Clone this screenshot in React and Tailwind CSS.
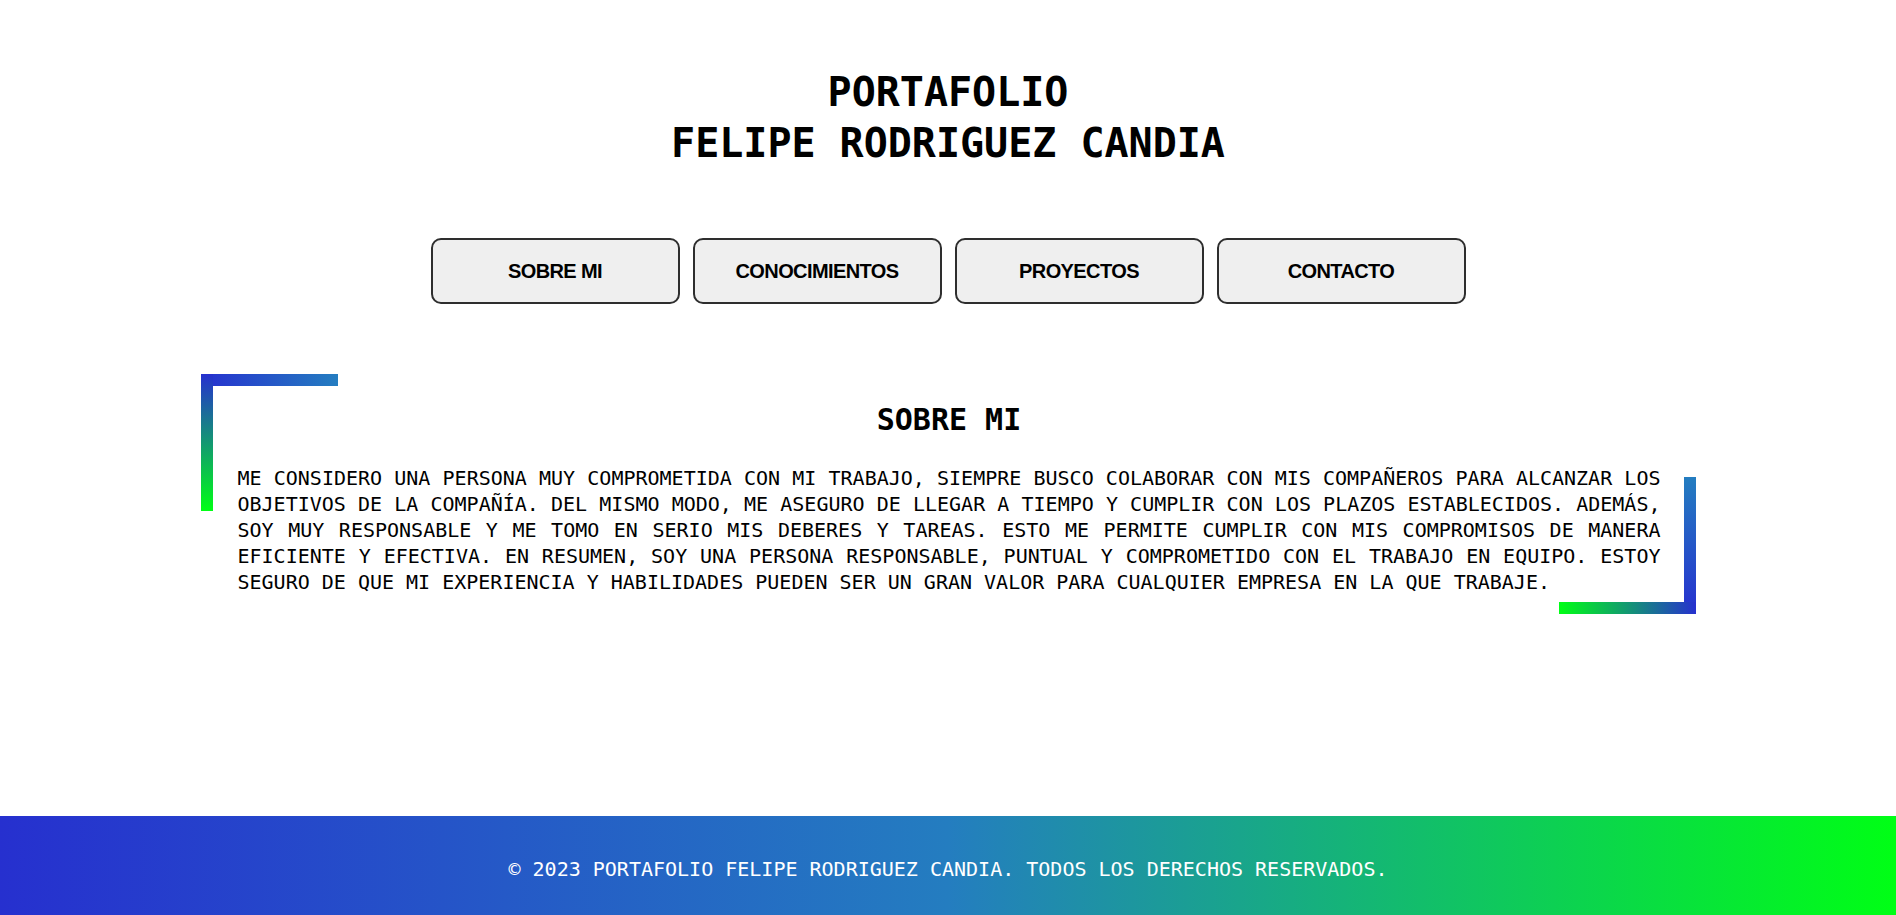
import React from 'react';

const mono = "font-['DejaVu_Sans_Mono','Liberation_Mono',monospace]";

const links = ['SOBRE MI', 'CONOCIMIENTOS', 'PROYECTOS', 'CONTACTO'];

const sobreMi =
  'ME CONSIDERO UNA PERSONA MUY COMPROMETIDA CON MI TRABAJO, SIEMPRE BUSCO COLABORAR CON MIS COMPAÑEROS PARA ALCANZAR LOS OBJETIVOS DE LA COMPAÑÍA. DEL MISMO MODO, ME ASEGURO DE LLEGAR A TIEMPO Y CUMPLIR CON LOS PLAZOS ESTABLECIDOS. ADEMÁS, SOY MUY RESPONSABLE Y ME TOMO EN SERIO MIS DEBERES Y TAREAS. ESTO ME PERMITE CUMPLIR CON MIS COMPROMISOS DE MANERA EFICIENTE Y EFECTIVA. EN RESUMEN, SOY UNA PERSONA RESPONSABLE, PUNTUAL Y COMPROMETIDO CON EL TRABAJO EN EQUIPO. ESTOY SEGURO DE QUE MI EXPERIENCIA Y HABILIDADES PUEDEN SER UN GRAN VALOR PARA CUALQUIER EMPRESA EN LA QUE TRABAJE.';

// decorative gradient corners around the section box
const Corners = () => (
  <>
    <div className="absolute left-0 top-0 w-[137px] h-[12px] bg-[linear-gradient(to_right,#2630cf,#247dc0)]" />
    <div className="absolute left-0 top-0 w-[12px] h-[137px] bg-[linear-gradient(to_bottom,#2630cf,#00ff15)]" />
    <div className="absolute right-0 bottom-0 w-[12px] h-[137px] bg-[linear-gradient(to_bottom,#247dc0,#2630cf)]" />
    <div className="absolute right-0 bottom-0 w-[137px] h-[12px] bg-[linear-gradient(to_right,#00ff15,#2630cf)]" />
  </>
);

const App = () => {
  return (
    <div className={`min-h-screen flex flex-col bg-white text-black ${mono}`}>
      <main className="flex-1 pt-[67px]">
        <header className="text-center">
          <h1 className="text-[40px] leading-[51px] font-bold">
            PORTAFOLIO
            <br />
            FELIPE RODRIGUEZ CANDIA
          </h1>
        </header>

        <nav className="mt-[69px] flex justify-center gap-[13px]">
          {links.map(label => (
            <button
              key={label}
              className="w-[249px] h-[66px] rounded-[10px] border-2 border-[#2e2e2e] bg-[#efefef] font-['Liberation_Sans',Arial,sans-serif] text-[20px] font-bold tracking-[-0.6px] text-black"
            >
              {label}
            </button>
          ))}
        </nav>

        <section className="relative mx-auto mt-[70px] w-[1495px] pl-[37px] pr-[35px] pt-[28px] pb-[19px]">
          <Corners />
          <h2 className="text-center text-[30px] leading-[36px] font-bold">SOBRE MI</h2>
          <p className="mt-[27px] text-[20px] leading-[26px] text-justify">{sobreMi}</p>
        </section>
      </main>

      <footer className="h-[99px] flex items-center justify-center bg-[linear-gradient(to_right,#2630cf,#247dc0,#00ff15)]">
        <p className="text-white text-[20px] leading-[26px] pt-[6px]">
          © 2023 PORTAFOLIO FELIPE RODRIGUEZ CANDIA. TODOS LOS DERECHOS RESERVADOS.
        </p>
      </footer>
    </div>
  );
};

export default App;
